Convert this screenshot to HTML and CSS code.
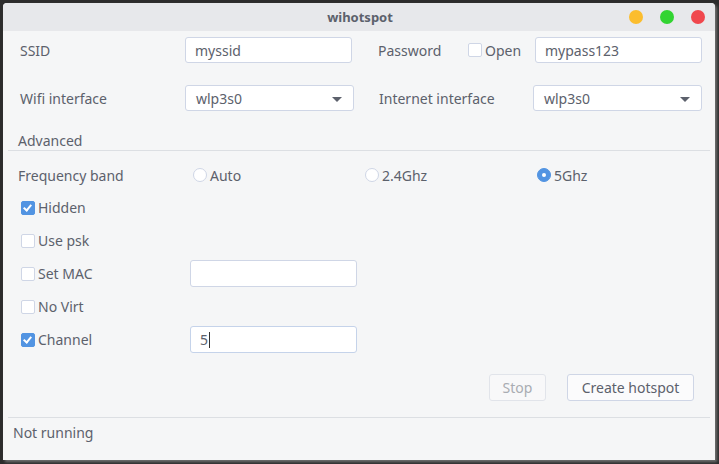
FILE: index.html
```html
<!DOCTYPE html>
<html>
<head>
<meta charset="utf-8">
<link rel="stylesheet" href="styles.css">
</head>
<body>
<div class="window">
  <div class="titlebar">
    <span class="title">wihotspot</span>
    <div class="controls">
      <span class="dot yellow"></span>
      <span class="dot green"></span>
      <span class="dot red"></span>
    </div>
  </div>

  <div class="row row1">
    <span class="lbl w165">SSID</span>
    <div class="input w167">myssid</div>
    <span class="lbl lbl-pass">Password</span>
    <label class="check open"><span class="box"></span>Open</label>
    <div class="input w167">mypass123</div>
  </div>

  <div class="row row2">
    <span class="lbl w165">Wifi interface</span>
    <div class="combo w169">wlp3s0<span class="arrow"></span></div>
    <span class="lbl lbl-inet">Internet interface</span>
    <div class="combo w169">wlp3s0<span class="arrow"></span></div>
  </div>

  <div class="section">Advanced</div>

  <div class="row freq">
    <span class="lbl w175">Frequency band</span>
    <label class="radio w172"><span class="circle"></span>Auto</label>
    <label class="radio w172"><span class="circle"></span>2.4Ghz</label>
    <label class="radio"><span class="circle on"></span>5Ghz</label>
  </div>

  <div class="options">
    <div class="opt"><label class="check w169b"><span class="box on"></span>Hidden</label></div>
    <div class="opt"><label class="check w169b"><span class="box"></span>Use psk</label></div>
    <div class="opt"><label class="check w169b"><span class="box"></span>Set MAC</label><div class="input w167 tall"></div></div>
    <div class="opt"><label class="check w169b"><span class="box"></span>No Virt</label></div>
    <div class="opt"><label class="check w169b"><span class="box on"></span>Channel</label><div class="input w167 tall focus">5<span class="caret"></span></div></div>
  </div>

  <div class="buttons">
    <button class="btn disabled stop">Stop</button>
    <button class="btn create">Create hotspot</button>
  </div>

  <div class="status">Not running</div>
</div>
</body>
</html>
```

FILE: styles.css
```css
html, body {
  margin: 0;
  padding: 0;
}
body {
  background: #2c2c2c;
  width: 719px;
  height: 464px;
  overflow: hidden;
  font-family: "Noto Sans", "DejaVu Sans", sans-serif;
  font-size: 14px;
  color: #5c616c;
}
.window {
  margin: 3px 0 0 3px;
  width: 712px;
  height: 457px;
  background: #f5f6f7;
  box-shadow: 2px 2px 3px rgba(160,160,160,0.6);
  border-radius: 4px 4px 0 0;
  display: flex;
  flex-direction: column;
}
.titlebar {
  height: 28px;
  flex: none;
  background: #e7e8eb;
  border-radius: 4px 4px 0 0;
  position: relative;
  display: flex;
  align-items: center;
  justify-content: center;
}
.title {
  font-weight: bold;
  font-size: 13px;
  color: #5c616c;
  padding-left: 2px;
}
.controls {
  position: absolute;
  right: 10px;
  top: 7px;
  display: flex;
  gap: 17px;
}
.dot {
  width: 14px;
  height: 14px;
  border-radius: 50%;
  display: block;
}
.yellow { background: #fbbd2e; }
.green { background: #32d432; }
.red { background: #f0474d; }

.row {
  display: flex;
  align-items: center;
  height: 26px;
  flex: none;
}
.row1 { margin-top: 6px; padding-left: 17px; }
.row2 { margin-top: 22px; padding-left: 17px; }
.lbl { white-space: nowrap; }
.w165 { width: 165px; flex: none; }
.w175 { width: 175px; flex: none; }
.w172 { width: 172px; flex: none; }
.w167 { width: 167px; flex: none; }
.w169 { width: 169px; flex: none; }
.lbl-pass { margin-left: 26px; width: 90px; flex: none; }
.lbl-inet { margin-left: 25px; width: 154px; flex: none; }

.input, .combo {
  box-sizing: border-box;
  height: 26px;
  background: #ffffff;
  border: 1px solid #cfd6e6;
  border-radius: 3px;
  padding-left: 9px;
  display: flex;
  align-items: center;
  position: relative;
  color: #5c616c;
}
.input.tall { height: 27px; }
.input.focus { border-color: #c5d3ea; }
.caret {
  display: inline-block;
  width: 1px;
  height: 16px;
  background: #333;
  margin-left: 1px;
}
.combo { padding-left: 10px; }
.arrow {
  position: absolute;
  right: 11px;
  top: 11px;
  width: 0;
  height: 0;
  border-left: 5px solid transparent;
  border-right: 5px solid transparent;
  border-top: 5px solid #5c616c;
}

.check, .radio {
  display: flex;
  align-items: center;
  white-space: nowrap;
}
.open { width: 67px; flex: none; }
.box {
  box-sizing: border-box;
  width: 14px;
  height: 14px;
  border: 1px solid #cfd6e6;
  border-radius: 2px;
  background: #ffffff;
  margin-right: 3px;
  flex: none;
  position: relative;
}
.box.on {
  background: #5294e2;
  border-color: #5294e2;
}
.box.on::after {
  content: "";
  position: absolute;
  left: 3px;
  top: 1px;
  width: 3px;
  height: 6px;
  border-right: 2px solid #fff;
  border-bottom: 2px solid #fff;
  transform: rotate(40deg);
}
.circle {
  box-sizing: border-box;
  width: 14px;
  height: 14px;
  border: 1px solid #cfd6e6;
  border-radius: 50%;
  background: #ffffff;
  margin-right: 3px;
  flex: none;
  position: relative;
}
.circle.on {
  background: #5294e2;
  border-color: #5294e2;
}
.circle.on::after {
  content: "";
  position: absolute;
  left: 4px;
  top: 4px;
  width: 4px;
  height: 4px;
  border-radius: 50%;
  background: #fff;
}

.section {
  margin: 20px 5px 0 5px;
  padding-left: 10px;
  height: 19px;
  line-height: 19px;
  border-bottom: 1px solid #dcdfe3;
  flex: none;
}
.freq {
  margin-top: 11px;
  padding-left: 15px;
}

.options {
  margin-top: 6px;
  padding-left: 18px;
  display: flex;
  flex-direction: column;
  gap: 6px;
  flex: none;
}
.opt {
  height: 27px;
  display: flex;
  align-items: center;
}
.w169b { width: 169px; flex: none; }

.buttons {
  margin-top: 21px;
  display: flex;
  justify-content: flex-end;
  gap: 21px;
  padding-right: 21px;
  flex: none;
}
.btn {
  box-sizing: border-box;
  height: 27px;
  font-family: inherit;
  font-size: 14px;
  color: #5c616c;
  background: #fbfbfc;
  border: 1px solid #cfd6e6;
  border-radius: 3px;
  padding: 0;
}
.stop { width: 57px; }
.create { width: 127px; }
.btn.disabled {
  color: #a9acb2;
  border-color: #e1e4ea;
  background: #f8f8f9;
}

.status {
  margin: 16px 5px 0 5px;
  border-top: 1px solid #dcdfe3;
  padding: 5px 0 0 5px;
  height: 20px;
  line-height: 20px;
  flex: none;
}
```
